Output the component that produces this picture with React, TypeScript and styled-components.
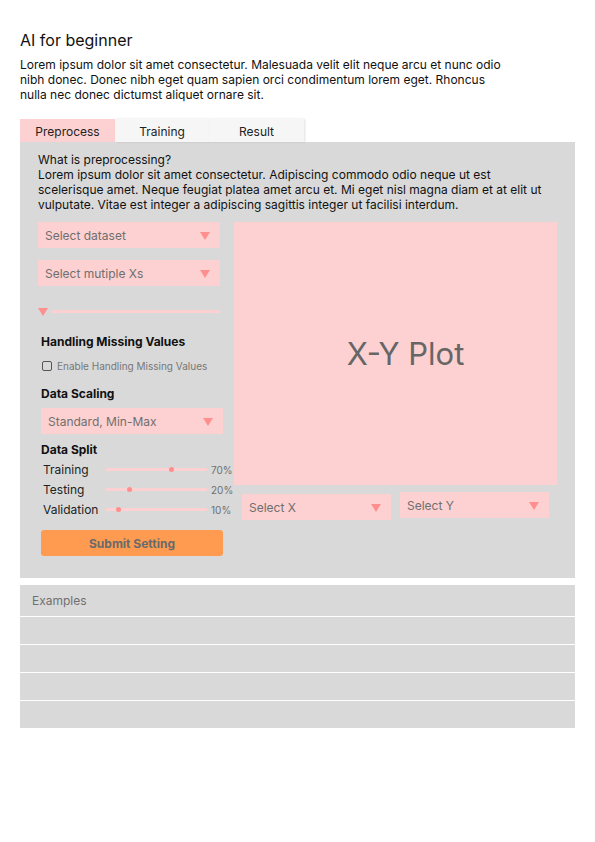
import React from "react";
import styled, { createGlobalStyle } from "styled-components";

const PINK = "#fdd1d1";
const GRAY = "#d9d9d9";
const MARK = "#ff8f8f";

const GlobalStyle = createGlobalStyle`
  body {
    margin: 0;
    background: #ffffff;
    font-family: Inter, "Noto Sans", sans-serif;
    color: #111111;
  }
`;

const Page = styled.div`
  width: 555px;
  padding: 30px 20px 0;
`;

const Title = styled.h1`
  margin: 0;
  font-size: 16px;
  line-height: 20px;
  font-weight: 400;
`;

const Intro = styled.p`
  margin: 7px 0 0;
  width: 486px;
  font-size: 12px;
  line-height: 15px;
`;

const Tabs = styled.div`
  display: flex;
  margin-top: 17px;
  height: 23px;
`;

const Tab = styled.div<{ $active?: boolean; $width: number }>`
  width: ${(p) => p.$width}px;
  display: flex;
  align-items: center;
  justify-content: center;
  padding-top: 1px;
  box-sizing: border-box;
  font-size: 12px;
  color: #222;
  background: ${(p) => (p.$active ? PINK : "#f6f6f6")};
  box-shadow: ${(p) => (p.$active ? "none" : "1px 0 2px rgba(0,0,0,0.12)")};
`;

const Panel = styled.section`
  background: ${GRAY};
  padding: 10px 18px 22px;
`;

const Description = styled.p`
  margin: 0;
  width: 508px;
  font-size: 12px;
  line-height: 15px;
`;

const Body = styled.div`
  display: flex;
  gap: 11px;
  margin-top: 10px;
`;

const LeftColumn = styled.div`
  width: 185px;
  display: flex;
  flex-direction: column;
`;

const RightColumn = styled.div`
  width: 323px;
  display: flex;
  flex-direction: column;
`;

const Select = styled.div<{ $width?: number; $top?: number }>`
  width: ${(p) => (p.$width ? `${p.$width}px` : "182px")};
  height: 26px;
  margin-top: ${(p) => p.$top ?? 0}px;
  box-sizing: border-box;
  background: ${PINK};
  display: flex;
  align-items: center;
  justify-content: space-between;
  padding: 0 10px 0 7px;
  font-size: 12px;
  color: #6f6f6f;
`;

const Caret = styled.span`
  width: 0;
  height: 0;
  border-left: 5px solid transparent;
  border-right: 5px solid transparent;
  border-top: 8px solid ${MARK};
  margin-top: 2px;
`;

const RangeRow = styled.div`
  display: flex;
  align-items: center;
  gap: 4px;
  margin-top: 20px;
  width: 182px;
`;

const RangeTrack = styled.div`
  flex: 1;
  height: 3px;
  background: ${PINK};
`;

const Settings = styled.div`
  padding-left: 3px;
  display: flex;
  flex-direction: column;
`;

const SectionLabel = styled.div<{ $top: number }>`
  margin-top: ${(p) => p.$top}px;
  font-size: 12px;
  line-height: 15px;
  font-weight: 700;
`;

const CheckRow = styled.label`
  display: flex;
  align-items: center;
  gap: 5px;
  margin-top: 11px;
  padding-left: 1px;
  font-size: 10px;
  color: #777;
`;

const Box = styled.span`
  width: 8px;
  height: 8px;
  border: 1px solid #555;
  border-radius: 2px;
`;

const SplitList = styled.div`
  display: flex;
  flex-direction: column;
  gap: 6px;
  margin-top: 5px;
`;

const SplitRow = styled.div`
  display: grid;
  grid-template-columns: 59px 101px auto;
  gap: 0 4px;
  align-items: center;
  height: 14px;
  padding-left: 2px;
`;

const SplitName = styled.span`
  font-size: 12px;
  color: #222;
`;

const SplitTrack = styled.div`
  position: relative;
  height: 3px;
  background: ${PINK};
`;

const Knob = styled.span`
  position: absolute;
  top: -1px;
  width: 5px;
  height: 5px;
  border-radius: 50%;
  background: ${MARK};
`;

const Percent = styled.span`
  font-size: 10px;
  color: #6f6f6f;
`;

const SubmitButton = styled.button`
  margin-top: 14px;
  width: 182px;
  height: 26px;
  border: none;
  border-radius: 3px;
  background: #ff9b50;
  font-family: inherit;
  font-size: 12px;
  font-weight: 700;
  color: #6a6a6a;
`;

const Plot = styled.div`
  height: 263px;
  background: ${PINK};
  display: flex;
  align-items: center;
  justify-content: center;
  padding-left: 20px;
  font-size: 31px;
  color: #666;
`;

const AxisRow = styled.div`
  display: flex;
  align-items: flex-start;
  gap: 9px;
  padding-left: 8px;
  margin-top: 7px;
`;

const Examples = styled.div`
  margin-top: 7px;
  display: flex;
  flex-direction: column;
  gap: 1px;
`;

const ExampleRow = styled.div<{ $head?: boolean }>`
  height: ${(p) => (p.$head ? "31px" : "27px")};
  background: ${GRAY};
  display: flex;
  align-items: center;
  padding-left: 12px;
  font-size: 12px;
  color: #707070;
`;

const splits = [
  { name: "Training", value: 70, knob: 63 },
  { name: "Testing", value: 20, knob: 21 },
  { name: "Validation", value: 10, knob: 10 },
];

export default function App() {
  return (
    <>
      <GlobalStyle />
      <Page>
        <Title>AI for beginner</Title>
        <Intro>
          Lorem ipsum dolor sit amet consectetur. Malesuada velit elit neque
          arcu et nunc odio nibh donec. Donec nibh eget quam sapien orci
          condimentum lorem eget. Rhoncus nulla nec donec dictumst aliquet
          ornare sit.
        </Intro>
        <Tabs>
          <Tab $active $width={95}>
            Preprocess
          </Tab>
          <Tab $width={94}>Training</Tab>
          <Tab $width={95}>Result</Tab>
        </Tabs>
        <Panel>
          <Description>
            What is preprocessing?
            <br />
            Lorem ipsum dolor sit amet consectetur. Adipiscing commodo odio
            neque ut est scelerisque amet. Neque feugiat platea amet arcu et.
            Mi eget nisl magna diam et at elit ut vulputate. Vitae est integer
            a adipiscing sagittis integer ut facilisi interdum.
          </Description>
          <Body>
            <LeftColumn>
              <Select>
                Select dataset
                <Caret />
              </Select>
              <Select $top={12}>
                Select mutiple Xs
                <Caret />
              </Select>
              <RangeRow>
                <Caret />
                <RangeTrack />
              </RangeRow>
              <Settings>
                <SectionLabel $top={18}>Handling Missing Values</SectionLabel>
                <CheckRow>
                  <Box />
                  Enable Handling Missing Values
                </CheckRow>
                <SectionLabel $top={14}>Data Scaling</SectionLabel>
                <Select $top={7}>
                  Standard, Min-Max
                  <Caret />
                </Select>
                <SectionLabel $top={8}>Data Split</SectionLabel>
                <SplitList>
                  {splits.map((s) => (
                    <SplitRow key={s.name}>
                      <SplitName>{s.name}</SplitName>
                      <SplitTrack>
                        <Knob style={{ left: s.knob }} />
                      </SplitTrack>
                      <Percent>{s.value}%</Percent>
                    </SplitRow>
                  ))}
                </SplitList>
                <SubmitButton>Submit Setting</SubmitButton>
              </Settings>
            </LeftColumn>
            <RightColumn>
              <Plot>X-Y Plot</Plot>
              <AxisRow>
                <Select $width={149} $top={2}>
                  Select X
                  <Caret />
                </Select>
                <Select $width={149}>
                  Select Y
                  <Caret />
                </Select>
              </AxisRow>
            </RightColumn>
          </Body>
        </Panel>
        <Examples>
          <ExampleRow $head>Examples</ExampleRow>
          <ExampleRow />
          <ExampleRow />
          <ExampleRow />
          <ExampleRow />
        </Examples>
      </Page>
    </>
  );
}
